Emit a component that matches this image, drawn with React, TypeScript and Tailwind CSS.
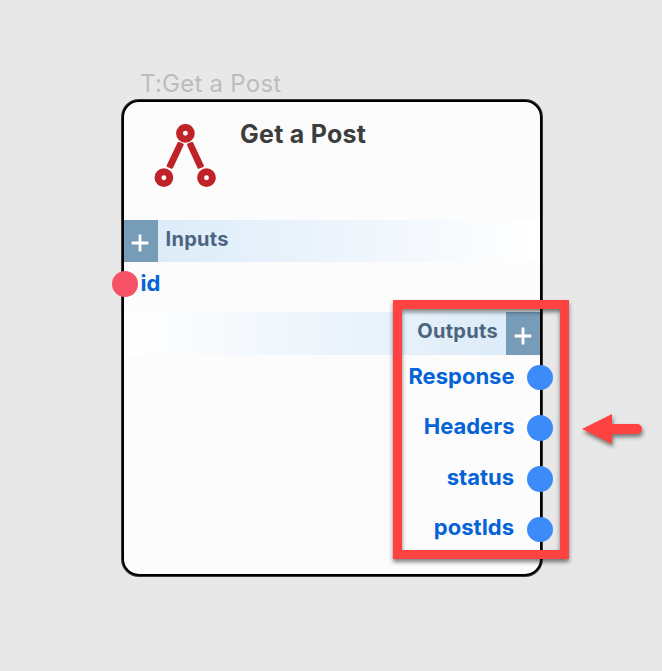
const outputs = [
  { name: "Response", gap: "mt-[9.5px]", label: "-mt-[3px] mr-[12.9px]" },
  { name: "Headers", gap: "mt-[24.5px]", label: "-mt-[4px] mr-[12.9px]" },
  { name: "status", gap: "mt-[25px]", label: "-mt-[4px] mr-[13.4px]" },
  { name: "postIds", gap: "mt-[24.5px]", label: "-mt-[5px] mr-[13.4px]" },
];

function Plus() {
  return (
    <svg width="18" height="18" viewBox="0 0 18 18" className="block">
      <path d="M0.6 9H17.4M9 0.6V17.4" stroke="#fff" strokeWidth="2.8" />
    </svg>
  );
}

function ConnectorIcon() {
  return (
    <svg width="62" height="64" viewBox="0 0 62 64" className="block">
      <g fill="none" stroke="#bf2228">
        <path d="M24.7 19L28.5 20.7L17.9 43.6L13.8 41.8ZM38 19L34.2 20.7L44.6 43.6L48.7 41.8Z" fill="#bf2228" strokeWidth="2.4" strokeLinejoin="round" />
        <circle cx="31.4" cy="9.3" r="5.9" strokeWidth="6.9" />
        <circle cx="9.9" cy="53.7" r="5.9" strokeWidth="6.9" />
        <circle cx="52.5" cy="53.7" r="5.9" strokeWidth="6.9" />
      </g>
    </svg>
  );
}

export default function App() {
  return (
    <main className="relative h-[671px] w-[662px] overflow-hidden bg-[#e8e8e8] pl-[122px] pt-[68px] font-['Inter',sans-serif] [font-feature-settings:'calt'_0]">
      <div className="h-[32px] pl-[18px] text-[24px] leading-[32px] tracking-[0.25px] whitespace-nowrap text-[#bcbcbc]">T:Get a Post</div>
      <section className="h-[476px] w-[419.5px] rounded-[17px] border-2 border-black bg-[#fcfcfc] shadow-[0_0_0_1px_rgba(0,0,0,0.75)]">
        <header className="flex h-[118px] items-start pl-[30px] pt-[22px]">
          <ConnectorIcon />
          <h1 className="ml-[24px] -mt-[6px] text-[25px] leading-[32px] font-bold tracking-[0.25px] whitespace-nowrap text-[#3d3d3d]">Get a Post</h1>
        </header>
        <div className="flex h-[42px] bg-linear-to-r from-[#d9eaf7] via-[#ecf4fc] to-white">
          <button className="flex w-[34px] items-center justify-center bg-[#779cb8] pr-[2px] pt-[4px]"><Plus /></button>
          <h2 className="ml-[7.5px] text-[20px] leading-[38px] font-bold tracking-[0.3px] text-[#4b6581]">Inputs</h2>
        </div>
        <div className="mt-[9px] -ml-[12px] flex h-[26px] items-center">
          <span className="h-[26px] w-[26px] rounded-full bg-[#f65164]" />
          <span className="ml-[2.5px] -mt-[3px] text-[22px] leading-[26px] font-bold text-[#0563d8]">id</span>
        </div>
        <div className="mt-[15px] flex h-[43px] justify-end bg-linear-to-r from-white via-[#ecf4fc] to-[#d9eaf7]">
          <h2 className="mr-[7.5px] text-[20px] leading-[38px] font-bold tracking-[0.3px] text-[#4b6581]">Outputs</h2>
          <button className="flex w-[34px] items-center justify-center bg-[#779cb8] pt-[5px]"><Plus /></button>
        </div>
        <ul className="-mr-[13.5px]">
          {outputs.map((o) => (
            <li key={o.name} className={"flex h-[26px] items-center justify-end " + o.gap}>
              <span className={"text-[22px] leading-[26px] font-bold text-[#0563d8] " + o.label}>{o.name}</span>
              <span className="h-[25.6px] w-[25.6px] rounded-full bg-[#3d8af9]" />
            </li>
          ))}
        </ul>
      </section>
      <div className="absolute left-[393px] top-[300px] h-[259px] w-[176px] border-[9px] border-[#ff4242] drop-shadow-[0_3px_2px_rgba(0,0,0,0.5)]" />
      <svg className="absolute left-[578px] top-[408px] drop-shadow-[1px_3px_2px_rgba(0,0,0,0.5)]" width="72" height="46" viewBox="0 0 72 46">
        <path d="M4 21L34 6V16H59A5 5 0 0 1 59 26H34V36Z" fill="#ff4242" />
      </svg>
    </main>
  );
}
